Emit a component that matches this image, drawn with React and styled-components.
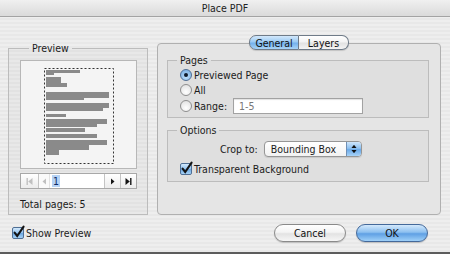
import React from "react";
import styled, { createGlobalStyle } from "styled-components";

const GlobalStyle = createGlobalStyle`
  html, body {
    margin: 0;
    padding: 0;
  }
  body {
    font-family: "DejaVu Sans Condensed", "DejaVu Sans", sans-serif;
    font-size: 10.5px;
    color: #1b1b1b;
  }
`;

const bars = [
  [2, 2, 34, 3],
  [2, 5, 8, 2],
  [2, 9, 15, 6],
  [2, 15, 21, 4],
  [2, 24, 63, 6],
  [2, 29, 38, 3],
  [2, 35, 63, 5],
  [2, 40, 57, 3],
  [2, 46, 20, 3],
  [2, 51, 61, 5],
  [2, 56, 51, 3],
  [2, 60, 39, 4],
  [2, 66, 51, 4],
  [2, 72, 61, 5],
  [2, 77, 43, 5],
  [2, 82, 13, 5],
];

const PageThumb = () => (
  <svg width="70" height="96" viewBox="0 0 70 96">
    <rect
      x="0.5"
      y="0.5"
      width="69"
      height="95"
      fill="none"
      stroke="#333"
      strokeDasharray="2 2"
    />
    {bars.map(([x, y, w, h], i) => (
      <rect key={i} x={x} y={y} width={w} height={h} fill="#8a8a8a" />
    ))}
  </svg>
);

const NavIcon = ({ kind, disabled }) => {
  const c = disabled ? "#c0c0c0" : "#151515";
  return (
    <svg width="7" height="7" viewBox="0 0 7 7">
      {kind === "first" && (
        <>
          <rect x="0.5" y="0" width="1.4" height="7" fill={c} />
          <polygon points="6.5,0 6.5,7 2.2,3.5" fill={c} />
        </>
      )}
      {kind === "prev" && <polygon points="5,0.5 5,6.5 1.5,3.5" fill={c} />}
      {kind === "next" && <polygon points="2,0.5 2,6.5 5.5,3.5" fill={c} />}
      {kind === "last" && (
        <>
          <polygon points="0.5,0 0.5,7 4.8,3.5" fill={c} />
          <rect x="5.1" y="0" width="1.4" height="7" fill={c} />
        </>
      )}
    </svg>
  );
};

const Check = () => (
  <CheckMark width="13" height="13" viewBox="0 0 13 13">
    <path
      d="M2.6 6.6 L5.2 10 L11.6 0.6"
      stroke="#141414"
      strokeWidth="2.1"
      fill="none"
      strokeLinecap="round"
    />
  </CheckMark>
);

const App = () => {
  return (
    <Window>
      <GlobalStyle />
      <TitleBar>Place PDF</TitleBar>

      <Body>
        <TopRow>
          <PreviewCol>
            <Group $pad="6px 10px 4px 11px">
              <Legend>Preview</Legend>
              <ImageBox>
                <PageThumb />
              </ImageBox>
              <NavBar>
                <NavButton $w={17}>
                  <NavIcon kind="first" disabled />
                </NavButton>
                <NavButton $w={10} $plain>
                  <NavIcon kind="prev" disabled />
                </NavButton>
                <PageField>
                  <Selected>1</Selected>
                </PageField>
                <NavButton $w={15}>
                  <NavIcon kind="next" />
                </NavButton>
                <NavButton $w={15}>
                  <NavIcon kind="last" />
                </NavButton>
              </NavBar>
              <TotalPages>Total pages: 5</TotalPages>
            </Group>
          </PreviewCol>

          <RightCol>
            <Tabs>
              <Tab $active $first>
                General
              </Tab>
              <Tab>Layers</Tab>
            </Tabs>
            <Pane>
              <Group $pad="1px 0 3px 0">
                <Legend>Pages</Legend>
                <Row $h={15}>
                  <Radio $on />
                  <span>Previewed Page</span>
                </Row>
                <Row $h={15}>
                  <Radio />
                  <span>All</span>
                </Row>
                <Row $h={17}>
                  <Radio />
                  <span>Range:</span>
                  <RangeField>1-5</RangeField>
                </Row>
              </Group>

              <Group $pad="4px 0 5px 0" $mt={6}>
                <Legend>Options</Legend>
                <CropRow>
                  <span>Crop to:</span>
                  <Select>
                    <SelectText>Bounding Box</SelectText>
                    <Stepper>
                      <svg width="6" height="10" viewBox="0 0 6 10">
                        <polygon points="0.5,4 5.5,4 3,0.8" fill="#111" />
                        <polygon points="0.5,6 5.5,6 3,9.2" fill="#111" />
                      </svg>
                    </Stepper>
                  </Select>
                </CropRow>
                <Row $h={14} $mt={5}>
                  <CheckBox>
                    <Check />
                  </CheckBox>
                  <span>Transparent Background</span>
                </Row>
              </Group>
            </Pane>
          </RightCol>
        </TopRow>

        <BottomRow>
          <ShowPreview>
            <CheckBox>
              <Check />
            </CheckBox>
            <span>Show Preview</span>
          </ShowPreview>
          <Buttons>
            <PushButton>Cancel</PushButton>
            <PushButton $primary>OK</PushButton>
          </Buttons>
        </BottomRow>
      </Body>
    </Window>
  );
};

export default App;

const Window = styled.div`
  width: 450px;
  height: 254px;
  box-sizing: border-box;
  display: flex;
  flex-direction: column;
  background: repeating-linear-gradient(
    to bottom,
    #eeeeee 0,
    #eeeeee 2px,
    #e8e8e8 2px,
    #e8e8e8 4px
  );
  border-bottom: 2px solid #5c5c5c;
  overflow: hidden;
`;

const TitleBar = styled.div`
  height: 16px;
  flex-shrink: 0;
  display: flex;
  align-items: center;
  justify-content: center;
  background: linear-gradient(#f0f0f0, #dadada);
  border-bottom: 1px solid #a3a3a3;
  color: #222;
`;

const Body = styled.div`
  display: flex;
  flex-direction: column;
  padding: 0 9px 0 8px;
`;

const TopRow = styled.div`
  display: flex;
  align-items: flex-start;
  gap: 9px;
  margin-top: 18px;
`;

const PreviewCol = styled.div`
  width: 140px;
  margin-top: 7px;
`;

const Group = styled.fieldset`
  margin: ${(p) => p.$mt || 0}px 0 0 0;
  padding: ${(p) => p.$pad};
  border: 1px solid #bcbcbc;
  background: rgba(0, 0, 0, 0.025);
  min-width: 0;
`;

const Legend = styled.legend`
  margin-left: 9px;
  padding: 0 3px;
  line-height: 12px;
  color: #1b1b1b;
`;

const ImageBox = styled.div`
  width: 117px;
  height: 109px;
  box-sizing: border-box;
  border: 1px solid #b7b7b7;
  background: #f4f4f4;
  display: flex;
  justify-content: center;
  padding-top: 7px;
`;

const NavBar = styled.div`
  margin-top: 4px;
  width: 117px;
  height: 16px;
  box-sizing: border-box;
  border: 1px solid #a8a8a8;
  background: #fff;
  display: flex;
`;

const NavButton = styled.div`
  width: ${(p) => p.$w}px;
  flex-shrink: 0;
  display: flex;
  align-items: center;
  justify-content: center;
  border-left: ${(p) => (p.$plain ? "none" : "1px solid #c4c4c4")};
  background: ${(p) =>
    p.$plain ? "#fafafa" : "linear-gradient(#ffffff, #ececec)"};
  &:first-child {
    border-left: none;
    border-right: 1px solid #c4c4c4;
  }
`;

const PageField = styled.div`
  flex: 1;
  display: flex;
  align-items: center;
  padding-left: 2px;
  border-left: 1px solid #e2e2e2;
`;

const Selected = styled.span`
  background: #b6d3f5;
  color: #0d2a66;
  padding: 0 1px;
  line-height: 12px;
`;

const TotalPages = styled.div`
  margin-top: 9px;
  line-height: 12px;
`;

const RightCol = styled.div`
  width: 285px;
  display: flex;
  flex-direction: column;
`;

const Tabs = styled.div`
  display: flex;
  justify-content: center;
  position: relative;
  z-index: 1;
  height: 15px;
  margin-bottom: -7px;
`;

const Tab = styled.div`
  width: 50px;
  box-sizing: border-box;
  display: flex;
  align-items: center;
  justify-content: center;
  border: 1px solid #6f7b88;
  border-left: ${(p) => (p.$first ? "1px solid #6f7b88" : "none")};
  border-radius: ${(p) => (p.$first ? "7px 0 0 7px" : "0 7px 7px 0")};
  background: ${(p) =>
    p.$active
      ? "linear-gradient(#d3e8fb 0%, #9bcaf3 45%, #74b1ec 55%, #a9d4f7 100%)"
      : "linear-gradient(#ffffff 0%, #f3f3f3 45%, #e2e2e2 55%, #f4f4f4 100%)"};
  box-shadow: 0 1px 1px rgba(0, 0, 0, 0.15);
  color: #111;
`;

const Pane = styled.div`
  height: 172px;
  box-sizing: border-box;
  border: 1px solid #b0b0b0;
  border-radius: 4px;
  background: #e5e5e5;
  padding: 10px 11px 0 9px;
  display: flex;
  flex-direction: column;
`;

const Row = styled.div`
  height: ${(p) => p.$h}px;
  margin-top: ${(p) => p.$mt || 0}px;
  display: flex;
  align-items: center;
  gap: 2px;
  padding-left: 12px;
`;

const Radio = styled.span`
  width: 12px;
  height: 12px;
  box-sizing: border-box;
  border-radius: 50%;
  flex-shrink: 0;
  display: flex;
  align-items: center;
  justify-content: center;
  border: 1px solid ${(p) => (p.$on ? "#4f6f95" : "#8e8e8e")};
  background: ${(p) =>
    p.$on
      ? "radial-gradient(circle at 50% 70%, #bfe0fb, #6fa7de)"
      : "radial-gradient(circle at 50% 70%, #ffffff, #dcdcdc)"};
  &::after {
    content: "";
    display: ${(p) => (p.$on ? "block" : "none")};
    width: 4px;
    height: 4px;
    border-radius: 50%;
    background: #0f1a2a;
  }
`;

const RangeField = styled.div`
  margin-left: 4px;
  width: 130px;
  height: 16px;
  box-sizing: border-box;
  border: 1px solid #a2a2a2;
  box-shadow: inset 0 1px 1px rgba(0, 0, 0, 0.12);
  background: #fff;
  color: #777;
  display: flex;
  align-items: center;
  padding-left: 5px;
`;

const CropRow = styled.div`
  height: 17px;
  display: flex;
  align-items: center;
  gap: 6px;
  padding-left: 52px;
`;

const Select = styled.div`
  width: 98px;
  height: 16px;
  box-sizing: border-box;
  border: 1px solid #969696;
  border-radius: 4px;
  background: linear-gradient(#ffffff, #f2f2f2);
  display: flex;
  overflow: hidden;
  box-shadow: 0 1px 1px rgba(0, 0, 0, 0.1);
`;

const SelectText = styled.div`
  flex: 1;
  display: flex;
  align-items: center;
  padding-left: 6px;
`;

const Stepper = styled.div`
  width: 14px;
  display: flex;
  align-items: center;
  justify-content: center;
  border-left: 1px solid #6f8fb5;
  background: linear-gradient(#cfe6fb 0%, #8fc1f0 45%, #6aa9e8 55%, #a8d3f7 100%);
`;

const CheckBox = styled.span`
  width: 12px;
  height: 12px;
  box-sizing: border-box;
  flex-shrink: 0;
  position: relative;
  border: 1px solid #4f6f95;
  border-radius: 2px;
  background: linear-gradient(#d2e8fb 0%, #92c3f0 50%, #6ea9e2 55%, #a6d2f6 100%);
`;

const CheckMark = styled.svg`
  position: absolute;
  left: -1px;
  top: -2px;
  overflow: visible;
`;

const BottomRow = styled.div`
  margin-top: 8px;
  height: 20px;
  display: flex;
  align-items: center;
  justify-content: space-between;
`;

const ShowPreview = styled.div`
  display: flex;
  align-items: center;
  gap: 2px;
  margin-left: 4px;
`;

const Buttons = styled.div`
  display: flex;
  gap: 10px;
  margin-right: 13px;
`;

const PushButton = styled.div`
  width: 72px;
  height: 18px;
  box-sizing: border-box;
  border-radius: 9px;
  display: flex;
  align-items: center;
  justify-content: center;
  border: 1px solid ${(p) => (p.$primary ? "#44699a" : "#8a8a8a")};
  background: ${(p) =>
    p.$primary
      ? "linear-gradient(#d4e9fc 0%, #8dc0f0 45%, #5fa0e4 55%, #9fd0f8 100%)"
      : "linear-gradient(#ffffff 0%, #f4f4f4 45%, #e3e3e3 55%, #f6f6f6 100%)"};
  box-shadow: 0 1px 1px rgba(0, 0, 0, 0.18);
  color: #111;
`;
